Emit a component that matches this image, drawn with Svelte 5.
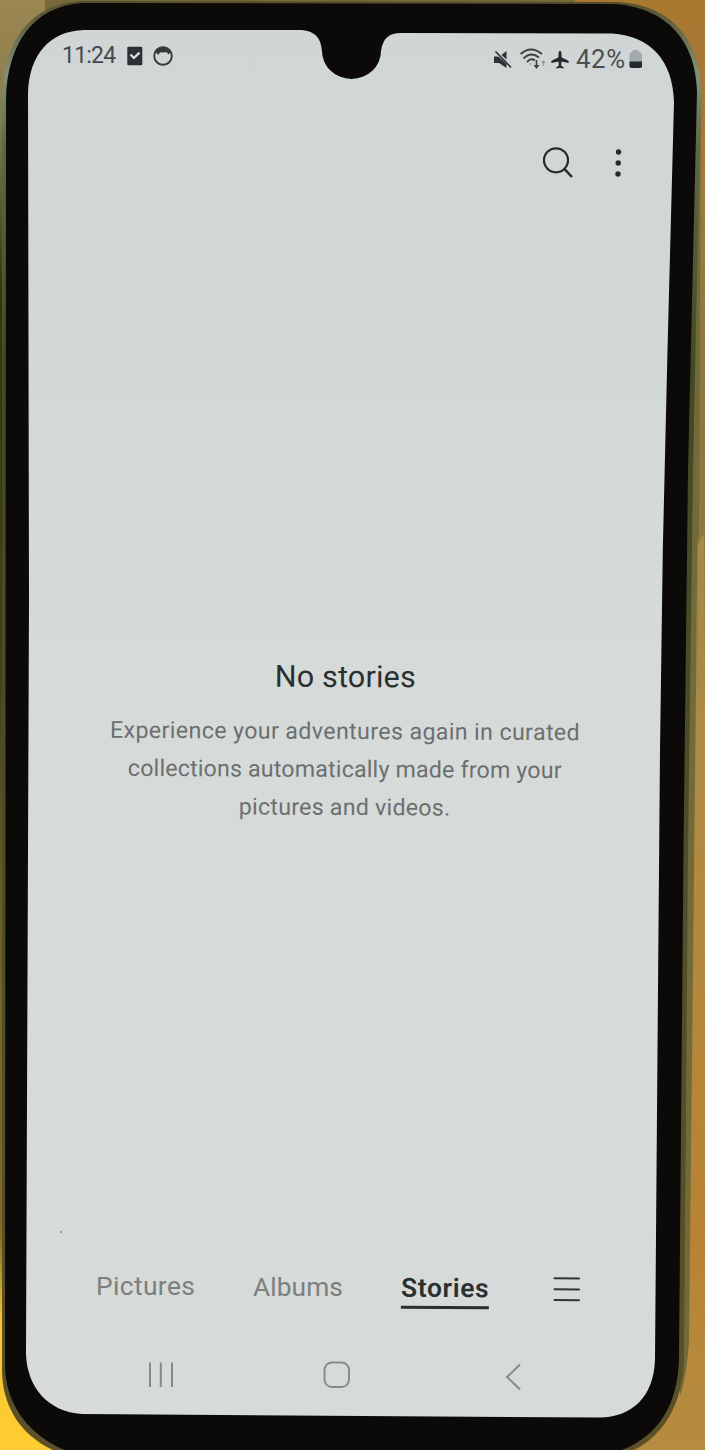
<script>
  const lines = [
    'Experience your adventures again in curated',
    'collections automatically made from your',
    'pictures and videos.'
  ];
</script>

<main class="scene">
  <svg class="device" viewBox="0 0 705 1450" aria-hidden="true">
    <defs>
      <linearGradient id="leftWall" x1="0" y1="0" x2="0" y2="1">
        <stop offset="0" stop-color="#9c8752" />
        <stop offset=".08" stop-color="#8b7c4c" />
        <stop offset=".2" stop-color="#303710" />
        <stop offset=".45" stop-color="#3e430f" />
        <stop offset=".65" stop-color="#706025" />
        <stop offset=".85" stop-color="#806d20" />
        <stop offset=".91" stop-color="#f5c631" />
        <stop offset="1" stop-color="#ffcd31" />
      </linearGradient>
      <linearGradient id="rightWall" x1="0" y1="0" x2="0" y2="1">
        <stop offset="0" stop-color="#a97830" />
        <stop offset=".1" stop-color="#a3793a" />
        <stop offset=".25" stop-color="#8d7841" />
        <stop offset=".37" stop-color="#8c793d" />
        <stop offset=".5" stop-color="#b18b45" />
        <stop offset=".85" stop-color="#b88332" />
        <stop offset="1" stop-color="#b58c40" />
      </linearGradient>
      <linearGradient id="rim" x1="0" y1="0" x2="0" y2="1">
        <stop offset="0" stop-color="#554e2a" />
        <stop offset=".05" stop-color="#819078" />
        <stop offset=".1" stop-color="#5d6847" />
        <stop offset=".25" stop-color="#444923" />
        <stop offset=".6" stop-color="#4f4d2a" />
        <stop offset="1" stop-color="#5c5027" />
      </linearGradient>
      <linearGradient id="glass" x1="0" y1="0" x2="0" y2="1">
        <stop offset="0" stop-color="#d0d5d5" />
        <stop offset=".15" stop-color="#d1d6d6" />
        <stop offset=".45" stop-color="#d6dbda" />
        <stop offset="1" stop-color="#d6dad9" />
      </linearGradient>
    </defs>
    <rect width="350" height="1450" fill="url(#leftWall)" />
    <rect x="350" width="355" height="1450" fill="url(#rightWall)" />
    <rect x="45" width="530" height="10" fill="#77683a" />
    <path d="M701 100 L699 535 Q697 540 697 548 L696 690 L689 1340 Q687 1375 680 1396 V100Z" fill="#716b3c" />
    <path d="M704 535 Q698 538 698 550 V690 Q698 694 704 697Z" fill="#a88a48" />
    <path d="M82 1 L618 2 C672 5 700 40 701 90 L693 470 L688 850 L684 1358 C683 1412 656 1449 610 1458 L75 1458 C25 1445 2 1410 2 1370 L2 100 C3 40 30 4 82 1Z" fill="url(#rim)" />
    <path d="M82 3 L615 4 C668 8 696 42 697 92 L688 470 L683.500 850 L679 1358 C678 1412 652 1444 606 1455 L78 1455 C30 1440 5 1405 5 1365 L6 100 C7 43 34 6 82 3Z" fill="#0c0a08" />
    <path d="M84 30 H301 C316 31 321 39 322 51 A29.5 28 0 0 0 381 51 C383 38 389 33 401 33 L612 33.500 C651 36 673 61 674 102 L667.500 350 L662.800 550 L660 750 L657.500 1050 L655 1359 C654 1398 631 1417 600 1417.500 L82 1414 C48 1412 27 1387 26 1354 L29 600 L28 94 C29 54 50 31 84 30Z" fill="url(#glass)" />
    <circle cx="61" cy="1232" r="1.200" fill="#9a9c9a" />
  </svg>

  <section class="screen">
    <header class="status">
      <div class="left">
        <span class="time">11:24</span>
        <svg class="task" width="16" height="20" viewBox="0 0 16 20">
          <rect x=".3" y=".7" width="15" height="18.500" rx="1" fill="#2c3133" />
          <path d="M3.500 8.500 L6.900 12 L12.500 6.600" fill="none" stroke="#dde1e0" stroke-width="2.300" />
        </svg>
        <svg class="face" width="20" height="20" viewBox="0 0 20 20">
          <circle cx="10" cy="10" r="8.800" fill="none" stroke="#34393a" stroke-width="1.900" />
          <path d="M2.500 6 Q5 .8 10 .8 Q15 .8 17.500 6 L15.500 8.500 L13.800 6.300 L7 6.600 L5.200 9Z" fill="#34393a" />
        </svg>
      </div>
      <div class="right">
        <svg class="mute" width="19" height="19" viewBox="0 0 19 19" fill="#2c3133">
          <path d="M1 6.500H5L6.500 7.500L13.500 14V18L6 13H1Z" />
          <path d="M8.500 5 L13.500 1V9.500Z" />
          <path d="M2.500 1.500 L18 17.500" fill="none" stroke="#2c3133" stroke-width="1.600" />
        </svg>
        <svg class="wifi" width="27" height="22" viewBox="0 0 27 22" fill="none" stroke="#3e4344" stroke-width="1.900">
          <path d="M1.500 6 Q12 -3 23 6 M4.500 10.500 Q12 3 20 9.500 M8 14 Q12 9.500 16 12.500" />
          <path d="M17.500 12V19" stroke-width="1.600" />
          <path d="M14.500 17H20.500L17.500 21Z" fill="#3e4344" stroke="none" />
          <path d="M24.500 13V18 M23 15L24.500 13L26 15 M11.500 15V17" stroke="#929897" stroke-width="1.200" />
        </svg>
        <svg class="plane" width="18" height="19" viewBox="0 0 18 19" fill="#24292b">
          <path d="M9 .5 Q10.500 1 10.500 4V7.300L17.700 11V13L10.500 11.500L10.200 15.700L12.700 17.300V18.500L9 17.800L5.300 18.500V17.300L7.800 15.700L7.500 11.500L.3 13V11L7.500 7.300V4Q7.500 1 9 .5Z" />
        </svg>
        <span class="percent">42%</span>
        <svg class="battery" width="14" height="20" viewBox="0 0 14 20">
          <path d="M4 2V1H9V2L13 4.500V17Q13 19 11 19H2.500Q.5 19 .5 17V4.500Z" fill="#a3aaab" />
          <path d="M.5 12.500H13V17Q13 19 11 19H2.500Q.5 19 .5 17Z" fill="#25292b" />
        </svg>
      </div>
    </header>

    <div class="actions">
      <svg width="32" height="34" viewBox="0 0 32 34" fill="none" stroke="#252a2b">
        <circle cx="14" cy="14.300" r="12" stroke-width="2.200" />
        <path d="M22.300 22.800 L30 31" stroke-width="2.500" />
      </svg>
      <svg width="8" height="30" viewBox="0 0 8 30" fill="#252a2b">
        <circle cx="4.500" cy="4" r="2.700" />
        <circle cx="4.200" cy="15" r="2.700" />
        <circle cx="4" cy="26" r="2.700" />
      </svg>
    </div>

    <div class="empty">
      <h1>No stories</h1>
      <p>{#each lines as line}<span class="line">{line}</span>{/each}</p>
    </div>

    <nav class="tabs">
      <span class="tab pictures">Pictures</span>
      <span class="tab albums">Albums</span>
      <span class="tab stories">Stories</span>
      <svg class="menu" width="28" height="27" viewBox="0 0 28 27" stroke="#303536" stroke-width="2.100" stroke-linecap="round">
        <path d="M1.500 2.200 L26 2.500 M1.500 13.200 L26 13.500 M1.500 24 L26 24.300" />
      </svg>
    </nav>

    <footer class="system">
      <svg class="recents" width="27" height="27" viewBox="0 0 27 27" stroke="#858988" stroke-width="2">
        <path d="M2 .5V25 M12.800 .5V25 M24 .5V25" />
      </svg>
      <svg class="home" width="28" height="28" viewBox="0 0 28 28">
        <rect x="1.500" y="1.500" width="24.500" height="24.500" rx="7.500" fill="none" stroke="#858988" stroke-width="1.900" />
      </svg>
      <svg class="back" width="17" height="28" viewBox="0 0 17 28">
        <path d="M15 2.500 L2 15 L15 27.500" fill="none" stroke="#858988" stroke-width="2" />
      </svg>
    </footer>
  </section>
</main>

<style>
  :global(body) { margin: 0; background: #0c0a08; }
  .scene {
    position: relative;
    width: 705px;
    height: 1450px;
    overflow: hidden;
    font-family: Roboto, 'Liberation Sans', sans-serif;
    color: #2a2f30;
  }
  .scene svg { display: block; flex: none; }
  .device { position: absolute; inset: 0; width: 705px; height: 1450px; }
  .screen {
    position: relative;
    box-sizing: border-box;
    display: flex;
    flex-direction: column;
    height: 1450px;
    padding-top: 42px;
  }
  .status {
    display: flex;
    justify-content: space-between;
    height: 32px;
    padding: 0 62px 0 62px;
  }
  .left { display: flex; align-items: center; height: 28px; }
  .right { display: flex; align-items: center; height: 34px; }
  .time { width: 65px; margin-top: -1px; font-size: 23px; letter-spacing: -0.8px; color: #444a4b; white-space: nowrap; }
  .face { margin-left: 10px; }
  .wifi { margin-left: 7px; }
  .plane { margin-left: 5px; }
  .percent { width: 53px; margin-left: 7px; font-size: 25.800px; letter-spacing: 0.6px; color: #4a5051; white-space: nowrap; }
  .actions {
    display: flex;
    justify-content: flex-end;
    align-items: center;
    gap: 40px;
    height: 34px;
    margin-top: 72px;
    padding-right: 83px;
  }
  .empty { width: 690px; margin-top: 477px; text-align: center; transform: rotate(.3deg); }
  h1 { margin: 0; font-size: 30.500px; line-height: 40px; font-weight: 400; letter-spacing: .2px; white-space: nowrap; }
  p { display: flex; flex-direction: column; margin: 15px 0 0; font-size: 23.200px; line-height: 38px; letter-spacing: .38px; color: #6b6f6f; }
  .line { white-space: nowrap; }
  .line:nth-child(2) { letter-spacing: .18px; }
  .line:nth-child(3) { letter-spacing: .25px; }
  .tabs {
    display: flex;
    align-items: flex-start;
    height: 42px;
    margin-top: 443px;
    padding-left: 96px;
    font-size: 26.300px;
    line-height: 36px;
    letter-spacing: .1px;
    color: #7b7f7f;
  }
  .tab { white-space: nowrap; }
  .pictures { width: 157px; margin-top: -1px; letter-spacing: .4px; }
  .albums { width: 148px; }
  .stories { width: 88px; margin-top: 1px; border-bottom: 3px solid #2a2f30; font-weight: 600; letter-spacing: .7px; color: #2a2f30; transform: rotate(.4deg); }
  .menu { margin: 7px 0 0 64px; }
  .system { display: flex; align-items: center; margin: 49px 0 0 148px; }
  .home { margin-left: 148px; }
  .back { margin-left: 154px; padding-top: 2px; }
</style>
